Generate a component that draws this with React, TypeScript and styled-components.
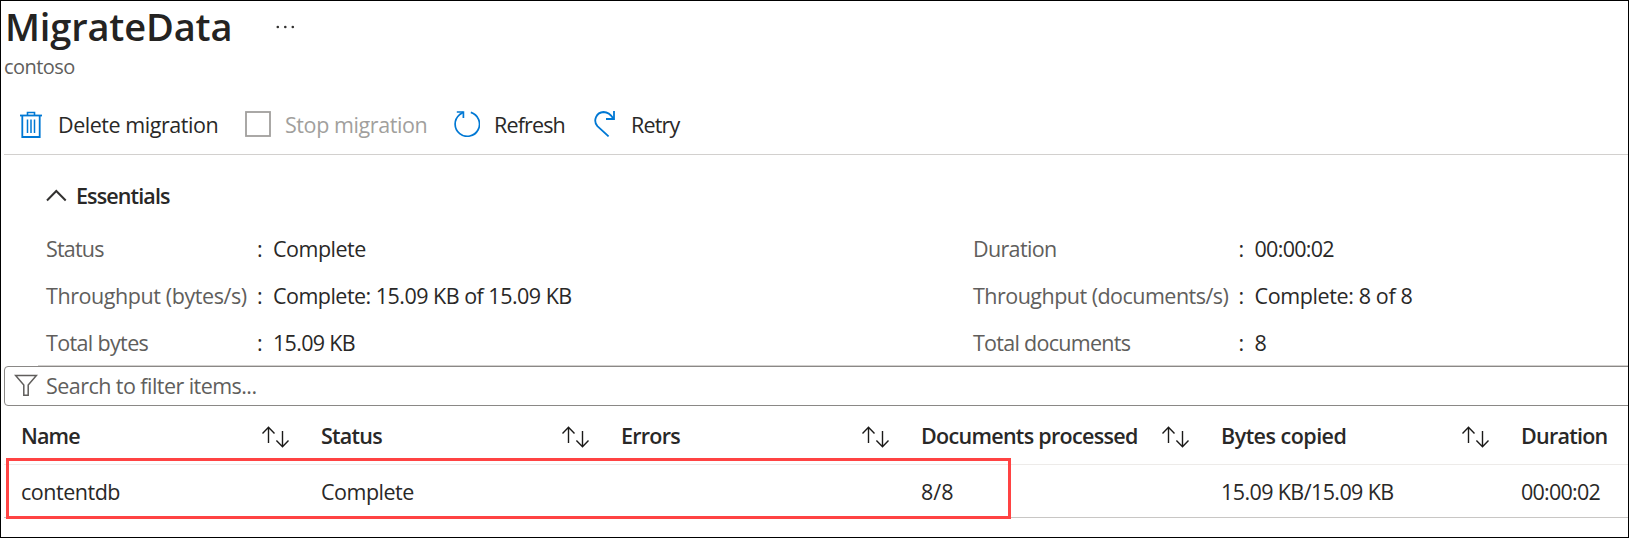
import React from "react";
import styled, { createGlobalStyle } from "styled-components";

const GlobalStyle = createGlobalStyle`
  * { box-sizing: border-box; }
  body { margin: 0; background: #fff; }
`;

const Frame = styled.div`
  width: 1629px;
  height: 538px;
  border: 1px solid #000;
  overflow: hidden;
  position: relative;
  background: #fff;
  color: #292827;
  font-family: "Open Sans", "Noto Sans", sans-serif;
  font-size: 21.5px;
  white-space: nowrap;
`;

const Text = styled.span<{ $track?: number }>`
  letter-spacing: ${(p) => p.$track ?? 0}px;
`;

const TitleRow = styled.header`
  display: flex;
  align-items: center;
  height: 51px;
  padding-left: 4px;
`;

const Title = styled.h1`
  margin: 0;
  width: 271px;
  font-size: 38px;
  line-height: 51px;
  font-weight: 600;
  letter-spacing: -0.15px;
  color: #242322;
`;

const Subtitle = styled.div`
  height: 29px;
  padding: 1px 0 0 3px;
  line-height: 28px;
  font-size: 20px;
  letter-spacing: -0.55px;
  color: #605e5c;
`;

const Toolbar = styled.nav`
  display: flex;
  height: 60px;
  margin: 14px 0 0 3px;
  border-bottom: 1px solid #d2d0ce;
`;

const Command = styled.div<{ $width: number; $gap: number; $disabled?: boolean }>`
  display: flex;
  align-items: center;
  gap: ${(p) => p.$gap}px;
  width: ${(p) => p.$width}px;
  color: ${(p) => (p.$disabled ? "#a19f9d" : "#292827")};

  &:first-child { margin-left: 16px; }
  svg { flex: none; margin-top: -1px; }
`;

const Essentials = styled.section`
  padding-top: 26px;
  margin-left: 37px;
  border-bottom: 1px solid #d2d0ce;
`;

const EssentialsHeader = styled.div`
  display: flex;
  align-items: center;
  gap: 9px;
  height: 29px;
  padding-left: 8px;
  font-weight: 600;
`;

const Properties = styled.div`
  display: grid;
  grid-template-columns: 927px 1fr;
  grid-auto-rows: 47px;
  height: 140px;
  margin-top: 15px;
  padding-left: 8px;
`;

const Property = styled.div<{ $labelWidth: number }>`
  display: grid;
  grid-template-columns: ${(p) => p.$labelWidth}px 16px 1fr;
  align-items: center;
`;

const Label = styled(Text)`
  color: #605e5c;
`;

const SearchBox = styled.div`
  display: flex;
  align-items: center;
  gap: 8px;
  height: 40px;
  margin: 0 -6px 0 3px;
  padding: 0 0 2px 9px;
  border: 1px solid #8a8886;
  border-radius: 4px;
  color: #605e5c;
`;

const TableRow = styled.div<{ $head?: boolean }>`
  display: grid;
  grid-template-columns: repeat(6, 300px);
  align-items: center;
  height: ${(p) => (p.$head ? 59 : 53)}px;
  margin-left: 3px;
  padding: 1px 0 0 17px;
  border-bottom: 1px solid ${(p) => (p.$head ? "#edebe9" : "#c8c6c4")};
  font-weight: ${(p) => (p.$head ? 600 : 400)};
`;

const Cell = styled.div`
  display: flex;
  align-items: center;
  justify-content: space-between;
  padding-right: 32px;

  svg { margin-top: 3px; }
`;

const Highlight = styled.div`
  position: absolute;
  left: 5px;
  top: 457px;
  width: 1005px;
  height: 61px;
  border: 3px solid #ff4343;
`;

const TrashIcon = () => (
  <svg width="22" height="27" viewBox="0 0 22 27" fill="none" stroke="#0078d4">
    <path d="M0 4.5H22" strokeWidth="1.8" />
    <path d="M7.5 4V1.5H14.5V4" strokeWidth="1.6" />
    <path d="M2.3 4V26H19.7V4" strokeWidth="1.8" />
    <path d="M7.5 8.5V22M11 8.5V22M14.5 8.5V22" strokeWidth="1.5" />
  </svg>
);

const StopIcon = () => (
  <svg width="26" height="26" viewBox="0 0 26 26" fill="none" stroke="#a19f9d" strokeWidth="1.8">
    <rect x="1" y="1" width="24" height="24" />
  </svg>
);

const RefreshIcon = () => (
  <svg width="26" height="26" viewBox="0 0 26 26" fill="none" stroke="#0078d4" strokeWidth="1.7">
    <path d="M16.8 1.4A12.2 12.2 0 1 1 5.4 3.8L9.2 1.2" />
    <path d="M2.8 1H9.4V7" />
  </svg>
);

const RetryIcon = () => (
  <svg width="22" height="26" viewBox="0 0 22 26" fill="none" stroke="#0078d4" strokeWidth="1.8">
    <path d="M14.6 25.4L3.4 15.2A8.6 8.6 0 0 1 9.5 1C14 1 16.8 3.5 19.5 7.8" />
    <path d="M20 0V8H12" />
  </svg>
);

const ChevronUp = () => (
  <svg width="21" height="13" viewBox="0 0 21 13" fill="none" stroke="#323130" strokeWidth="2">
    <path d="M1 11.5L10.3 2L19.7 11.5" />
  </svg>
);

const FilterIcon = () => (
  <svg width="24" height="23" viewBox="0 0 24 23" fill="none" stroke="#605e5c" strokeWidth="1.5">
    <path d="M1.6 1.5H22.4L14.2 11V21.3H9.8V11Z" />
  </svg>
);

const SortIcon = () => (
  <svg width="27" height="22" viewBox="0 0 27 22" fill="none" stroke="#1b1a19" strokeWidth="1.4">
    <path d="M6.5 17V1.5M0.5 7.5L6.5 1.2L12.5 7.5" />
    <path d="M20.5 5V20.5M14.4 14.5L20.5 20.8L26.5 14.5" />
  </svg>
);

const MoreIcon = () => (
  <svg width="20" height="4" viewBox="0 0 20 4" fill="#323130">
    <circle cx="1.8" cy="2" r="1.3" />
    <circle cx="9.3" cy="2" r="1.3" />
    <circle cx="16.8" cy="2" r="1.3" />
  </svg>
);

type Entry = { label: string; labelTrack: number; value: string; valueTrack: number };

const properties: Entry[] = [
  { label: "Status", labelTrack: -0.8, value: "Complete", valueTrack: -0.5 },
  { label: "Duration", labelTrack: -0.65, value: "00:00:02", valueTrack: -0.7 },
  { label: "Throughput (bytes/s)", labelTrack: -0.42, value: "Complete: 15.09 KB of 15.09 KB", valueTrack: -0.52 },
  { label: "Throughput (documents/s)", labelTrack: -0.52, value: "Complete: 8 of 8", valueTrack: -0.38 },
  { label: "Total bytes", labelTrack: -0.65, value: "15.09 KB", valueTrack: -0.7 },
  { label: "Total documents", labelTrack: -0.72, value: "8", valueTrack: 0 },
];

const columns = [
  { name: "Name", nameTrack: -0.87, value: "contentdb", track: -0.48 },
  { name: "Status", nameTrack: -0.75, value: "Complete", track: -0.49 },
  { name: "Errors", nameTrack: -0.76, value: "", track: 0 },
  { name: "Documents processed", nameTrack: -0.7, value: "8/8", track: 0 },
  { name: "Bytes copied", nameTrack: -0.52, value: "15.09 KB/15.09 KB", track: -0.6 },
  { name: "Duration", nameTrack: -0.75, value: "00:00:02", track: -0.75 },
];

export default function App() {
  return (
    <Frame>
      <GlobalStyle />
      <TitleRow>
        <Title>MigrateData</Title>
        <MoreIcon />
      </TitleRow>
      <Subtitle>contoso</Subtitle>
      <Toolbar>
        <Command $width={225} $gap={16}>
          <TrashIcon />
          <Text $track={-0.45}>Delete migration</Text>
        </Command>
        <Command $width={209} $gap={14} $disabled>
          <StopIcon />
          <Text $track={-0.42}>Stop migration</Text>
        </Command>
        <Command $width={140} $gap={14}>
          <RefreshIcon />
          <Text $track={-0.85}>Refresh</Text>
        </Command>
        <Command $width={100} $gap={15}>
          <RetryIcon />
          <Text $track={-0.85}>Retry</Text>
        </Command>
      </Toolbar>
      <Essentials>
        <EssentialsHeader>
          <ChevronUp />
          <Text $track={-0.88}>Essentials</Text>
        </EssentialsHeader>
        <Properties>
          {properties.map((p, i) => (
            <Property key={p.label} $labelWidth={211 + (i % 2) * 54.5}>
              <Label $track={p.labelTrack}>{p.label}</Label>
              <span>:</span>
              <Text $track={p.valueTrack}>{p.value}</Text>
            </Property>
          ))}
        </Properties>
      </Essentials>
      <SearchBox>
        <FilterIcon />
        <Text $track={-0.55}>Search to filter items...</Text>
      </SearchBox>
      <TableRow $head>
        {columns.map((c, i) => (
          <Cell key={c.name}>
            <Text $track={c.nameTrack}>{c.name}</Text>
            {i < columns.length - 1 && <SortIcon />}
          </Cell>
        ))}
      </TableRow>
      <TableRow>
        {columns.map((c) => (
          <Cell key={c.name}>
            <Text $track={c.track}>{c.value}</Text>
          </Cell>
        ))}
      </TableRow>
      <Highlight />
    </Frame>
  );
}
